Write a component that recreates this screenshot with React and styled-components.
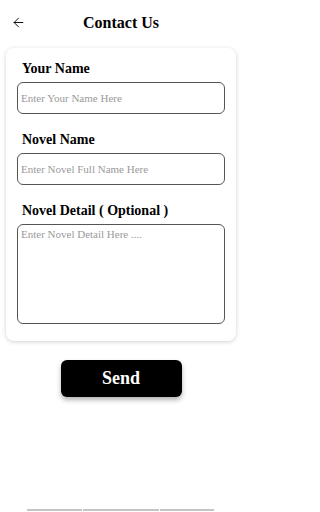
import React from 'react';
import styled, { createGlobalStyle } from 'styled-components';
import { ArrowLeft } from 'lucide-react';

const GlobalStyle = createGlobalStyle`
  html, body {
    margin: 0;
    padding: 0;
    background: #ffffff;
    font-family: "Liberation Serif", "Times New Roman", serif;
  }
  * { box-sizing: border-box; }
`;

const Page = styled.div`
  display: flex;
  flex-direction: column;
  height: 512px;
  width: 242px;
  overflow: hidden;
`;

const Header = styled.header`
  position: relative;
  height: 46px;
  display: flex;
  align-items: center;
  justify-content: center;
`;

const BackButton = styled.button`
  position: absolute;
  left: 11px;
  top: 15px;
  border: 0;
  background: none;
  padding: 0;
  display: flex;
  color: #111;
`;

const Title = styled.h1`
  margin: 0;
  font-size: 16px;
  font-weight: bold;
  color: #000;
`;

const Card = styled.form`
  margin: 2px 6px 0;
  padding: 13px 11px 17px;
  background: #fff;
  border-radius: 8px;
  box-shadow: 0 1px 4px rgba(0, 0, 0, 0.18);
  display: flex;
  flex-direction: column;
`;

const Field = styled.div`
  display: flex;
  flex-direction: column;
  gap: 5px;
  & + & {
    margin-top: 18px;
  }
`;

const Label = styled.label`
  padding-left: 5px;
  font-size: 14px;
  line-height: 16px;
  color: #000;
  font-weight: 600;
`;

const inputBase = `
  width: 100%;
  border: 1px solid #555;
  border-radius: 6px;
  background: #fff;
  font-family: "Liberation Serif", "Times New Roman", serif;
  font-size: 11px;
  color: #222;
  outline: none;
  &::placeholder {
    color: #9a9a9a;
  }
`;

const Input = styled.input`
  ${inputBase}
  height: 32px;
  padding: 0 3px;
`;

const TextArea = styled.textarea`
  ${inputBase}
  height: 100px;
  padding: 3px 3px;
  resize: none;
`;

const SendButton = styled.button`
  align-self: center;
  margin-top: 19px;
  width: 121px;
  height: 37px;
  border: 0;
  border-radius: 6px;
  background: #000;
  color: #fff;
  font-family: "Liberation Serif", "Times New Roman", serif;
  font-size: 18px;
  font-weight: bold;
  box-shadow: 0 3px 5px rgba(0, 0, 0, 0.3);
`;

const BottomBar = styled.div`
  margin-top: auto;
  margin-bottom: 1px;
  display: flex;
  gap: 1px;
  padding-left: 27px;
`;

const Segment = styled.span`
  display: block;
  height: 2px;
  width: ${(p) => p.w}px;
  background: #c4c4c4;
`;

export default function App() {
  return (
    <Page>
      <GlobalStyle />
      <Header>
        <BackButton type="button" aria-label="Back">
          <ArrowLeft size={15} strokeWidth={1.6} />
        </BackButton>
        <Title>Contact Us</Title>
      </Header>
      <Card onSubmit={(e) => e.preventDefault()}>
        <Field>
          <Label>Your Name</Label>
          <Input placeholder="Enter Your Name Here" />
        </Field>
        <Field>
          <Label>Novel Name</Label>
          <Input placeholder="Enter Novel Full Name Here" />
        </Field>
        <Field>
          <Label>Novel Detail ( Optional )</Label>
          <TextArea placeholder="Enter Novel Detail Here ...." />
        </Field>
      </Card>
      <SendButton type="button">Send</SendButton>
      <BottomBar>
        <Segment w={55} />
        <Segment w={76} />
        <Segment w={54} />
      </BottomBar>
    </Page>
  );
}
